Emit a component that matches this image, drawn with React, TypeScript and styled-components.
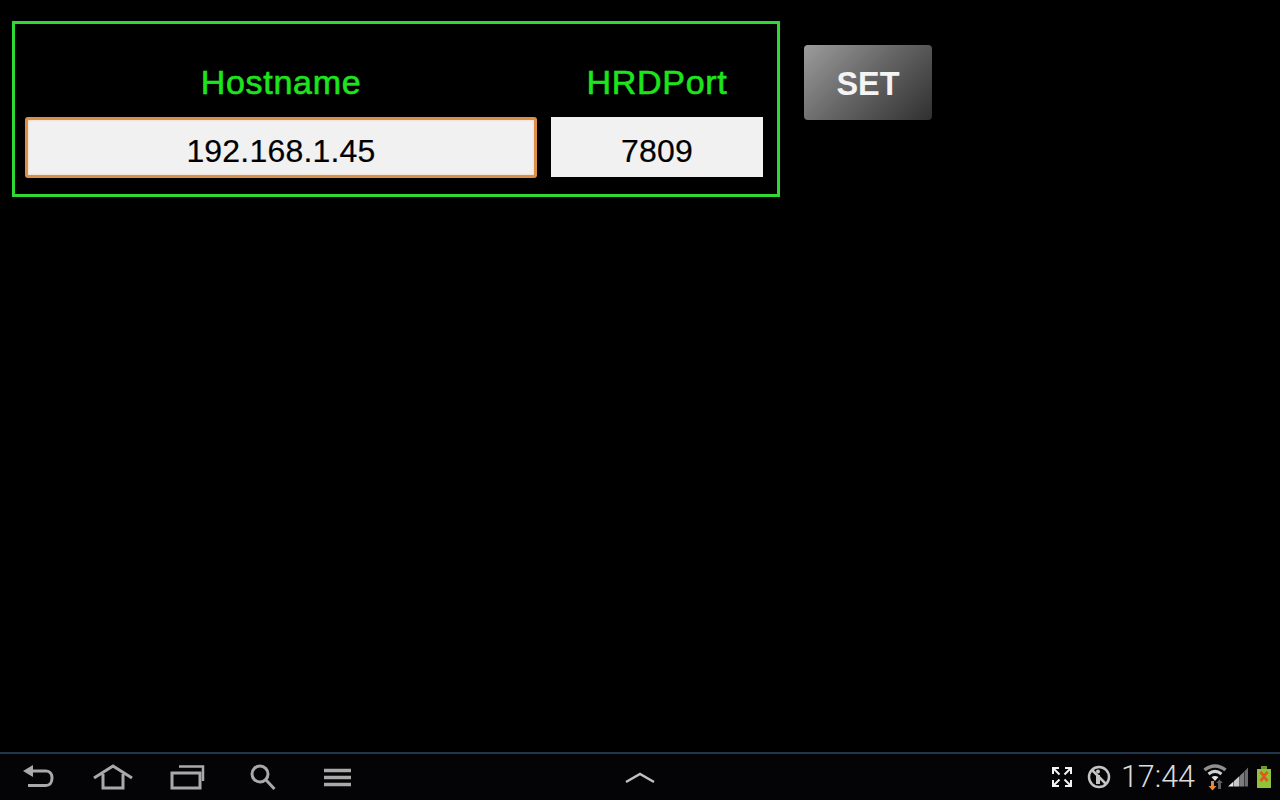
import React from 'react';
import styled, { createGlobalStyle } from 'styled-components';

const GlobalStyle = createGlobalStyle`
  html, body, #root {
    margin: 0;
    height: 100%;
    background: #000;
  }
  body {
    font-family: "Liberation Sans", Arial, sans-serif;
    overflow: hidden;
  }
`;

const Screen = styled.div`
  display: flex;
  flex-direction: column;
  height: 100vh;
`;

const Content = styled.main`
  flex: 1;
  display: flex;
  align-items: flex-start;
  gap: 24px;
  padding: 21px 0 0 12px;
`;

const Frame = styled.section`
  display: grid;
  grid-template-columns: 512px 212px;
  grid-template-rows: 40px auto;
  column-gap: 14px;
  row-gap: 15px;
  padding: 38px 14px 16px 10px;
  border: 3px solid #2fd832;
`;

const Label = styled.div`
  line-height: 40px;
  text-align: center;
  font-size: 34px;
  letter-spacing: 0.7px;
  color: #1de51d;
  -webkit-text-stroke: 0.6px #1de51d;
`;

const Field = styled.div<{ $focused?: boolean }>`
  box-sizing: border-box;
  height: ${p => (p.$focused ? 61 : 60)}px;
  padding-top: ${p => (p.$focused ? 13 : 16)}px;
  align-self: start;
  text-align: center;
  font-size: 32px;
  letter-spacing: 0.2px;
  line-height: 36px;
  color: #000;
  -webkit-text-stroke: 0.2px #000;
  background: #f1f1f2;
  border: ${p => (p.$focused ? '3px solid #dc8f49' : 'none')};
  border-radius: ${p => (p.$focused ? 3 : 0)}px;
  box-shadow: ${p => (p.$focused ? 'inset 0 0 2px #f6c898' : 'none')};
`;

const SetButton = styled.button`
  width: 128px;
  height: 75px;
  margin-top: 24px;
  padding: 3px 0 0;
  border: none;
  border-radius: 4px;
  font-family: inherit;
  font-size: 32.4px;
  font-weight: 700;
  color: #f4f4f4;
  background: linear-gradient(135deg, #9c9c9c 0%, #636363 50%, #303030 100%);
`;

const NavBar = styled.footer`
  box-sizing: border-box;
  height: 48px;
  display: grid;
  grid-template-columns: 1fr 60px 1fr;
  align-items: center;
  background: #040406;
  border-top: 2px solid #22384a;
`;

const NavGroup = styled.div`
  display: flex;
  align-items: center;
`;

const NavSlot = styled.div`
  width: 75px;
  display: flex;
  justify-content: center;
`;

const StatusGroup = styled.div`
  display: flex;
  align-items: center;
  justify-content: flex-end;
  padding-right: 9px;
`;

const Clock = styled.span`
  margin: 0 8px 0 10px;
  font-family: Roboto, sans-serif;
  font-weight: 300;
  font-size: 30.5px;
  line-height: 36px;
  color: #dcdcdc;
`;

const Icon = styled.svg<{ $ml?: number }>`
  display: block;
  flex: none;
  margin-left: ${p => p.$ml ?? 0}px;
`;

const Chevron = styled(Icon)`
  justify-self: center;
`;

const BackIcon = () => (
  <Icon width="36" height="32" viewBox="0 0 36 32" fill="none">
    <path d="M3 10l10-6v12z" fill="#a9a9a9" />
    <path d="M11 10h15c4 0 6 3 6 7s-2 7.500-6 7.500H8" stroke="#a9a9a9" strokeWidth="3" />
  </Icon>
);

const HomeIcon = () => (
  <Icon width="42" height="32" viewBox="0 0 42 32" fill="none">
    <path d="M2 17L21 5l19 12M11 13v14h20V13" stroke="#a9a9a9" strokeWidth="3" />
  </Icon>
);

const RecentIcon = () => (
  <Icon width="36" height="32" viewBox="0 0 36 32" fill="none">
    <rect x="2" y="12" width="28" height="15" stroke="#a9a9a9" strokeWidth="3" />
    <path d="M9 5.500h24V20" stroke="#a9a9a9" strokeWidth="2.500" />
  </Icon>
);

const SearchIcon = () => (
  <Icon width="30" height="32" viewBox="0 0 30 32" fill="none">
    <circle cx="12" cy="13" r="8" stroke="#a9a9a9" strokeWidth="3" />
    <path d="M18 19l8.500 9" stroke="#a9a9a9" strokeWidth="3" />
  </Icon>
);

const MenuIcon = () => (
  <Icon width="28" height="32" viewBox="0 0 28 32" fill="none">
    <path d="M0 9.500h27M0 16.500h27M0 23.500h27" stroke="#a9a9a9" strokeWidth="3.500" />
  </Icon>
);

const FullscreenIcon = () => (
  <Icon width="22" height="22" viewBox="0 0 22 22" fill="none">
    <g stroke="#f2f2f2" strokeWidth="2">
      <path d="M2 8V2h6M2 2l6.500 6.500" />
      <path d="M20 8V2h-6M20 2l-6.500 6.500" />
      <path d="M2 14v6h6M2 20l6.500-6.500" />
      <path d="M20 14v6h-6M20 20l-6.500-6.500" />
    </g>
  </Icon>
);

const NoSyncIcon = () => (
  <Icon $ml={14} width="24" height="24" viewBox="0 0 24 24" fill="none">
    <circle cx="12" cy="12" r="10" stroke="#c4c4c4" strokeWidth="2.500" />
    <path d="M5 5l14 14" stroke="#c4c4c4" strokeWidth="2.500" />
    <circle cx="11" cy="6.500" r="2" fill="#c4c4c4" />
    <path d="M9 10h4v9H9z" fill="#c4c4c4" />
  </Icon>
);

const WifiIcon = () => (
  <Icon width="24" height="30" viewBox="0 0 24 30" fill="none">
    <path d="M1.500 8c6.500-5.500 14.500-5.500 21 0" stroke="#8f8f8f" strokeWidth="3.500" />
    <path d="M5.500 12c4-3.200 9-3.200 13 0" stroke="#d0d0d0" strokeWidth="3" />
    <path d="M8.500 15c2.500-1.500 4.500-1.500 7 0L12 19z" fill="#e2e2e2" />
    <path d="M8 19h3v5h2.500l-4 4.500-4-4.500H8z" fill="#e58a3c" />
    <path d="M15 27v-6h-2l3.500-3.500L20 21h-2v6z" fill="#5e5e5e" />
  </Icon>
);

const SignalIcon = () => (
  <Icon width="22" height="22" viewBox="0 0 22 22">
    <path d="M1 20.500l5.500-5v5z" fill="#e6e6e6" />
    <path d="M7 20.500V15l5.500-5v10.500z" fill="#c8c8c8" />
    <path d="M13 20.500V9.500l4-3.700v14.700z" fill="#7c7c7c" />
    <path d="M17.500 20.500V5.300L21 1.500v19z" fill="#6c6c6c" />
  </Icon>
);

const BatteryIcon = () => (
  <Icon $ml={8} width="14" height="22" viewBox="0 0 14 22">
    <path d="M4 0h6v3H4z" fill="#6d9a2d" />
    <path d="M0 3h14v19H0z" fill="#8fc33a" />
    <path d="M2.500 7l2-2L7 8l2.500-3 2 2-3 3.500 3 3.500-2 2L7 13l-2.500 3-2-2 3-3.500z" fill="#e0581f" />
  </Icon>
);

const navIcons = [BackIcon, HomeIcon, RecentIcon, SearchIcon, MenuIcon];

function App(): React.JSX.Element {
  return (
    <Screen>
      <GlobalStyle />
      <Content>
        <Frame>
          <Label>Hostname</Label>
          <Label>HRDPort</Label>
          <Field $focused>192.168.1.45</Field>
          <Field>7809</Field>
        </Frame>
        <SetButton>SET</SetButton>
      </Content>
      <NavBar>
        <NavGroup>
          {navIcons.map((NavIcon, i) => (
            <NavSlot key={i}>
              <NavIcon />
            </NavSlot>
          ))}
        </NavGroup>
        <Chevron width="32" height="16" viewBox="0 0 32 16" fill="none">
          <path d="M2 13l14-8 14 8" stroke="#c0c0c0" strokeWidth="2.500" />
        </Chevron>
        <StatusGroup>
          <FullscreenIcon />
          <NoSyncIcon />
          <Clock>17:44</Clock>
          <WifiIcon />
          <SignalIcon />
          <BatteryIcon />
        </StatusGroup>
      </NavBar>
    </Screen>
  );
}

export default App;
